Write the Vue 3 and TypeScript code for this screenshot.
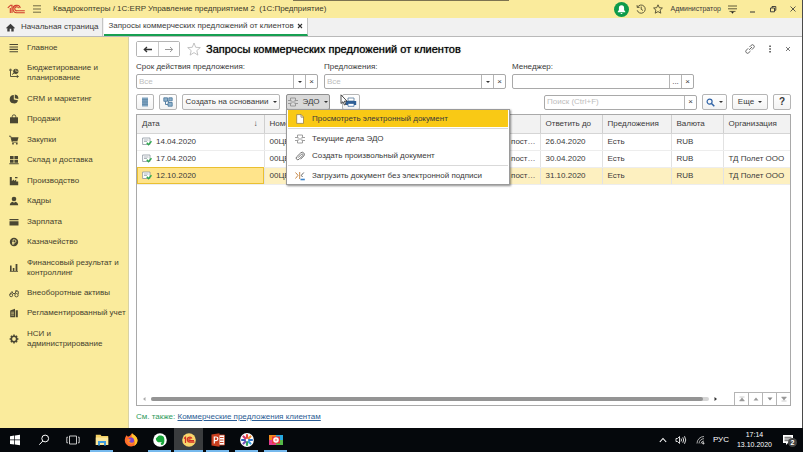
<script setup lang="ts">
import { ref } from 'vue'

interface NavItem {
  label: string
  icon: string
}

interface RequestRow {
  date: string
  number: string
  state: string
  due: string
  offers: string
  currency: string
  company: string
}

const navItems: NavItem[] = [
  { label: 'Главное', icon: 'lines' },
  { label: 'Бюджетирование и\nпланирование', icon: 'plan' },
  { label: 'CRM и маркетинг', icon: 'pie' },
  { label: 'Продажи', icon: 'bag' },
  { label: 'Закупки', icon: 'cart' },
  { label: 'Склад и доставка', icon: 'boxes' },
  { label: 'Производство', icon: 'factory' },
  { label: 'Кадры', icon: 'person' },
  { label: 'Зарплата', icon: 'card' },
  { label: 'Казначейство', icon: 'coin' },
  { label: 'Финансовый результат и\nконтроллинг', icon: 'bars' },
  { label: 'Внеоборотные активы', icon: 'assets' },
  { label: 'Регламентированный учет', icon: 'ledger' },
  { label: 'НСИ и\nадминистрирование', icon: 'gear' },
]

const rows: RequestRow[] = [
  { date: '14.04.2020', number: '00ЦБ', state: 'пост…', due: '26.04.2020', offers: 'Есть', currency: 'RUB', company: '' },
  { date: '17.04.2020', number: '00ЦБ', state: 'пост…', due: '30.04.2020', offers: 'Есть', currency: 'RUB', company: 'ТД Полет ООО' },
  { date: '12.10.2020', number: '00ЦБ', state: 'пост…', due: '31.10.2020', offers: 'Есть', currency: 'RUB', company: 'ТД Полет ООО' },
]

const selected = ref(2)
const validity = ref('')
const offersFilter = ref('')
const manager = ref('')
const search = ref('')
</script>

<template>
  <div class="desktop">
    <div class="window">
      <header class="titlebar">
        <i class="share-strip"></i>
        <svg class="logo" viewBox="0 0 18 10" width="18" height="10" aria-hidden="true">
          <path d="M.8 3.800 3.600 1.200H5V9M3.300 4V9" fill="none" stroke="#d03a2b" stroke-width="1.100" />
          <path d="M13.300 4A3.700 3.700 0 1 0 10 8.700H17.800M11.600 4.200A2 2 0 1 0 10 6.800H17.800" fill="none" stroke="#d03a2b" stroke-width="1.100" />
        </svg>
        <button class="plain" aria-label="Главное меню">
          <svg viewBox="0 0 8 8" width="8" height="8"><path d="M0 .8H8M0 4H8M0 7.200H8" stroke="#6f6944" stroke-width="1" /></svg>
        </button>
        <span class="app-name">Квадрокоптеры / 1С:ERP Управление предприятием 2&nbsp; (1С:Предприятие)</span>
        <div class="title-tools">
          <button class="plain bell" aria-label="Уведомления">
            <svg viewBox="0 0 15 15" width="15" height="15">
              <circle cx="7.5" cy="7.5" r="7.5" fill="#0d9b4a" />
              <path d="M7.5 3.200a2.700 2.700 0 0 0-2.600 2.700v2L3.700 9.700v.6h7.600v-.6L10.100 7.900V5.900A2.700 2.700 0 0 0 7.500 3.200ZM6.500 11h2a1 1 0 0 1-2 0Z" fill="#fff" />
            </svg>
          </button>
          <button class="plain" aria-label="История">
            <svg viewBox="0 0 10 10" width="10" height="10" fill="none" stroke="#4e4a30" stroke-width=".9">
              <path d="M1.500 3.200A4.100 4.100 0 1 1 1.200 6.300M1 1.200 1.300 3.500 3.600 3.300M5.200 2.600V5.300L7 6.500" />
            </svg>
          </button>
          <button class="plain" aria-label="Избранное">
            <svg viewBox="0 0 10 10" width="10" height="10"><path d="m5 .8 1.300 2.900 3.100.3-2.300 2.100.7 3.100L5 7.600 2.200 9.200l.7-3.100L.6 4l3.100-.3Z" fill="none" stroke="#4e4a30" stroke-width=".9" /></svg>
          </button>
          <span class="user">Администратор</span>
          <button class="plain" aria-label="Настройки">
            <svg viewBox="0 0 9 9" width="9" height="9"><path d="M0 1H9M0 3.800H9M1.500 6.400H7.500" stroke="#4e4a30" stroke-width=".9" /><path d="M3 6.800H6L4.500 8.800Z" fill="#222" /></svg>
          </button>
          <button class="plain win" aria-label="Свернуть">
            <svg viewBox="0 0 8 8" width="8" height="8"><path d="M1 7H6" stroke="#333" stroke-width="1" /></svg>
          </button>
          <button class="plain win" aria-label="Восстановить">
            <svg viewBox="0 0 8 8" width="8" height="8" fill="none" stroke="#333" stroke-width=".9"><path d="M1.500 3H5.500V6.800H1.500ZM3 3V1.500H6.800V5.300H5.500" /></svg>
          </button>
          <button class="plain win" aria-label="Закрыть">
            <svg viewBox="0 0 8 8" width="8" height="8"><path d="m1.500 1.500 5 5m0-5-5 5" stroke="#333" stroke-width=".8" /></svg>
          </button>
        </div>
      </header>

      <nav class="tabs" aria-label="Открытые окна">
        <a class="tab" href="#home">
          <svg viewBox="0 0 9 9" width="9" height="9"><path d="M4.500.7 0 4.900l.7.600.6-.5V8.500H3.700V5.800H5.300V8.500H7.700V5l.6.500.7-.6Z" fill="#3c3c3c" /></svg>
          Начальная страница
        </a>
        <a class="tab current" href="#requests">
          <span class="tab-text">Запросы коммерческих предложений от клиентов</span>
          <svg viewBox="0 0 6 6" width="6" height="6"><path d="m1 1 4 4m0-4-4 4" stroke="#333" stroke-width="1.100" /></svg>
        </a>
      </nav>

      <div class="body">
        <nav class="sidebar" aria-label="Разделы">
          <a v-for="item in navItems" :key="item.label" class="nav-item" href="#section">
            <svg viewBox="0 0 10 10" width="10" height="10" fill="#4a4733" aria-hidden="true">
              <path v-if="item.icon === 'lines'" d="M.5 1h8.500v1.100H.5ZM.5 3.400h8.500v1.100H.5ZM.5 5.800h8.500v1.100H.5ZM.5 8.200h8.500v1.100H.5Z" />
              <g v-else-if="item.icon === 'plan'">
                <path d="M1.500 1.500V8.500H9M0 2.800 1.500.8 3 2.800M7.700 7.200 9.500 8.500 7.700 9.800M3 6.500 5 5.200" fill="none" stroke="#4a4733" stroke-width=".9" />
                <circle cx="6.800" cy="3.300" r="2.600" /><path d="M6.800 3.300V1.200M6.800 3.300H9" stroke="#faeb9c" stroke-width=".6" />
              </g>
              <path v-else-if="item.icon === 'pie'" d="M4.800 1A4.200 4.200 0 1 0 9 6.200L4.800 5.400ZM5.800.6V4.300L9.300 5A4 4 0 0 0 5.800.6Z" />
              <g v-else-if="item.icon === 'bag'">
                <path d="M1 3.300H9V9.300H1Z" /><path d="M3.200 4.500V2.600a1.800 1.800 0 0 1 3.600 0V4.500" fill="none" stroke="#4a4733" stroke-width=".9" />
              </g>
              <g v-else-if="item.icon === 'cart'">
                <path d="M2 2.200H9.500L8.500 6H3Z" /><path d="M0 1.200H1.700L3.300 7.100H8.600" fill="none" stroke="#4a4733" stroke-width=".9" /><circle cx="4" cy="8.700" r=".9" /><circle cx="7.800" cy="8.700" r=".9" />
              </g>
              <path v-else-if="item.icon === 'boxes'" d="M1 1H4.600V4.200H1ZM5.400 1H9V4.200H5.400ZM1 5H4.600V7.800H1ZM5.400 5H9V7.800H5.400ZM.3 8.300H9.700V9.300H.3Z" />
              <path v-else-if="item.icon === 'factory'" d="M.8 9.200V1H2.800V5L5 3.600V5L7.200 3.600V5.500H9.200V9.200ZM6 1H8.500V2.300H6Z" />
              <g v-else-if="item.icon === 'person'">
                <circle cx="5" cy="3" r="2.300" /><path d="M.8 9.200C.8 7 2.500 6 4 5.800L5 7 6 5.800C7.500 6 9.200 7 9.200 9.200Z" />
              </g>
              <path v-else-if="item.icon === 'card'" d="M.5 2H9.500V3.200H.5ZM.5 4.300H9.500V8.500H.5Z" />
              <g v-else-if="item.icon === 'coin'">
                <circle cx="5" cy="5" r="4.200" /><path d="M4 8V2.800H5.600a1.300 1.300 0 0 1 0 2.700H3M3 6.700H5.600" fill="none" stroke="#faeb9c" stroke-width=".8" />
              </g>
              <path v-else-if="item.icon === 'bars'" d="M1 2.500H2.600V8H1ZM3.800 5H5.400V8H3.800ZM6.600 1H8.400V8H6.600ZM.8 8.200H9V9H.8Z" />
              <g v-else-if="item.icon === 'assets'" fill="none" stroke="#4a4733" stroke-width=".9">
                <path d="M.5 6.500 3 3.500 4 5.500H6L7.500 2.500M6 3H9L9.600 5.800" /><circle cx="2.200" cy="7.200" r="1.500" /><circle cx="7.500" cy="7.200" r="1.700" />
              </g>
              <g v-else-if="item.icon === 'ledger'">
                <path d="M1.200 2.400 6 .8V9.200H1.200ZM6.700 2.200H8.800V9.200H6.700Z" /><path d="M2.200 4.200H5M2.200 5.700H5M2.200 7.200H5" stroke="#faeb9c" stroke-width=".6" />
              </g>
              <g v-else>
                <circle cx="5" cy="5" r="2.700" fill="none" stroke="#4a4733" stroke-width="1.600" />
                <path d="M5 .6V2M5 8V9.400M.6 5H2M8 5H9.400M1.900 1.900l1 1M7.100 7.100l1 1M8.100 1.900l-1 1M2.900 7.100l-1 1" stroke="#4a4733" stroke-width="1.500" />
              </g>
            </svg>
            <span>{{ item.label }}</span>
          </a>
        </nav>

        <main class="form">
          <div class="heading">
            <div class="history">
              <button aria-label="Назад"><svg viewBox="0 0 9 7" width="9" height="7"><path d="M9 3.500H1.500M4 1 1.300 3.500 4 6" fill="none" stroke="#333" stroke-width="1.300" /></svg></button>
              <button aria-label="Вперед"><svg viewBox="0 0 9 7" width="9" height="7"><path d="M0 3.500H7.500M5 1 7.700 3.500 5 6" fill="none" stroke="#999" stroke-width="1" /></svg></button>
            </div>
            <button class="plain star" aria-label="В избранное">
              <svg viewBox="0 0 14 14" width="14" height="14"><path d="m7 1 1.700 4.300 4.600.3-3.500 3 1.100 4.500L7 10.600l-3.900 2.500 1.100-4.500-3.500-3 4.600-.3Z" fill="#fff" stroke="#b4b4b4" stroke-width=".8" /></svg>
            </button>
            <h1>Запросы коммерческих предложений от клиентов</h1>
            <div class="heading-tools">
              <button class="plain" aria-label="Ссылка">
                <svg viewBox="0 0 10 10" width="10" height="10" fill="none" stroke="#555" stroke-width=".9"><path d="M4.200 5.800 7 3M4.500 3 6.200 1.300a1.600 1.600 0 0 1 2.500 2.500L6.800 5.700M5.500 7 3.800 8.700A1.600 1.600 0 0 1 1.300 6.200L3.200 4.300" /></svg>
              </button>
              <button class="plain" aria-label="Дополнительно">
                <svg viewBox="0 0 8 8" width="8" height="8" fill="#444"><path d="M3.300.5h1.500V2H3.300ZM3.300 3.300h1.500v1.500H3.300ZM3.300 6.100h1.500v1.500H3.300Z" /></svg>
              </button>
              <button class="plain" aria-label="Закрыть форму">
                <svg viewBox="0 0 6 6" width="6" height="6"><path d="m1 1 4 4m0-4-4 4" stroke="#555" stroke-width=".8" /></svg>
              </button>
            </div>
          </div>

          <div class="filters">
            <div class="field">
              <label for="validity">Срок действия предложения:</label>
              <div class="box">
                <input id="validity" v-model="validity" placeholder="Все" />
                <button aria-label="Выбрать срок"><i class="caret"></i></button>
                <button aria-label="Очистить срок">×</button>
              </div>
            </div>
            <div class="field">
              <label for="offers">Предложения:</label>
              <div class="box">
                <input id="offers" v-model="offersFilter" placeholder="Все" />
                <button aria-label="Выбрать предложения"><i class="caret"></i></button>
                <button aria-label="Очистить предложения">×</button>
              </div>
            </div>
            <div class="field">
              <label for="manager">Менеджер:</label>
              <div class="box">
                <input id="manager" v-model="manager" />
                <button aria-label="Выбрать менеджера">...</button>
                <button aria-label="Очистить менеджера">×</button>
              </div>
            </div>
          </div>

          <div class="toolbar">
            <button class="btn square" aria-label="Список">
              <svg viewBox="0 0 10 10" width="10" height="10"><path d="M2 .5H8V9.500H2Z" fill="#7fa3c0" /><path d="M2 2.700H8M2 5H8M2 7.300H8" stroke="#4d7899" stroke-width=".6" /></svg>
            </button>
            <button class="btn square" aria-label="Структура подчиненности">
              <svg viewBox="0 0 10 10" width="10" height="10"><path d="M.8.8H4.500V4.300H.8ZM5.800.8H9.200V3.800H5.800ZM5 5.500H9.200V9.200H5Z" fill="#8fb2cc" stroke="#47759b" stroke-width=".8" /><path d="M2.500 4.300V7.500H5M4.500 3 6 5.500" stroke="#47759b" stroke-width=".9" fill="none" /></svg>
            </button>
            <button class="btn create">Создать на основании <i class="caret"></i></button>
            <div class="menu-anchor">
              <button class="btn edo" aria-haspopup="true" aria-expanded="true">
                <svg viewBox="0 0 10 10" width="10" height="10" fill="none" stroke="#888" stroke-width=".8"><path d="M2.500 3V1H7.500V3M2.500 7V9H7.500V7M0 3.500H3.500M6.500 3.500H10M0 6.500H3.500M6.500 6.500H10M2.500 5H7.500" /></svg>
                ЭДО <i class="caret"></i>
              </button>
              <div class="menu" role="menu">
                <button class="menu-item active" role="menuitem">
                  <svg viewBox="0 0 10 10" width="10" height="10"><path d="M1.700.6H6.200L8.500 3V9.400H1.700Z" fill="#fff" stroke="#8a7440" stroke-width=".7" /><path d="M6 .6V3.200H8.500" fill="none" stroke="#8a7440" stroke-width=".7" /></svg>
                  Просмотреть электронный документ
                </button>
                <hr />
                <button class="menu-item" role="menuitem">
                  <svg viewBox="0 0 10 10" width="10" height="10" fill="none" stroke="#888" stroke-width=".8"><path d="M2.500 3V1H7.500V3M2.500 7V9H7.500V7M0 3.500H3.500M6.500 3.500H10M0 6.500H3.500M6.500 6.500H10M2.500 5H7.500" /></svg>
                  Текущие дела ЭДО
                </button>
                <button class="menu-item" role="menuitem">
                  <svg viewBox="0 0 10 10" width="10" height="10" fill="none" stroke="#666" stroke-width=".9"><path d="M3 6.700 6.500 3.200a.9.900 0 0 1 1.300 1.300L4 8.300A1.700 1.700 0 0 1 1.600 5.900L5.800 1.800a2.200 2.200 0 0 1 3.100 3.100L5.500 8.300" /></svg>
                  Создать произвольный документ
                </button>
                <hr />
                <button class="menu-item" role="menuitem">
                  <svg viewBox="0 0 10 10" width="10" height="10" fill="none" stroke-width="1"><path d="M.5 1.500 3 4.300.5 7.500M4.700 1V8" stroke="#c78a4b" /><path d="M8.800 1.500 6.300 4.300 7.500 6" stroke="#666" /><path d="M5.500 8.500H9.800" stroke="#3c83c9" stroke-width="1.600" /></svg>
                  Загрузить документ без электронной подписи
                </button>
              </div>
            </div>
            <div class="print-wrap">
              <button class="btn square" aria-label="Печать">
                <svg viewBox="0 0 12 10" width="12" height="10"><path d="M3 1H9V4H3Z" fill="#fff" stroke="#56789a" stroke-width=".8" /><path d="M.8 4H11.200V8H.8Z" fill="#2e5f96" /><path d="M3 6.500H9V9.300H3Z" fill="#fff" stroke="#2e5f96" stroke-width=".7" /></svg>
              </button>
              <svg class="pointer" viewBox="0 0 8 12" width="8" height="12" aria-hidden="true"><path d="M1 .8V9.500L3 7.700 4.500 11 5.800 10.400 4.400 7.200H7Z" fill="#fff" stroke="#222" stroke-width=".8" /></svg>
            </div>
            <div class="box search">
              <input v-model="search" aria-label="Поиск" placeholder="Поиск (Ctrl+F)" />
              <button aria-label="Очистить поиск">×</button>
            </div>
            <button class="btn find" aria-label="Найти">
              <svg viewBox="0 0 9 9" width="9" height="9"><circle cx="3.600" cy="3.600" r="2.500" fill="none" stroke="#2e62a6" stroke-width="1.200" /><path d="m5.500 5.500 2.800 2.800" stroke="#2e62a6" stroke-width="1.500" /></svg>
              <i class="caret"></i>
            </button>
            <button class="btn more">Еще <i class="caret"></i></button>
            <button class="btn square help">?</button>
          </div>

          <div class="list">
            <table>
              <colgroup>
                <col class="c-date" /><col class="c-number" /><col class="c-state" /><col class="c-due" /><col class="c-offers" /><col class="c-currency" /><col class="c-company" />
              </colgroup>
              <thead>
                <tr>
                  <th><span class="sorted">Дата <b>↓</b></span></th>
                  <th>Номер</th>
                  <th></th>
                  <th>Ответить до</th>
                  <th>Предложения</th>
                  <th>Валюта</th>
                  <th>Организация</th>
                </tr>
              </thead>
              <tbody>
                <tr v-for="(row, i) in rows" :key="row.date" :class="{ picked: i === selected }" @click="selected = i">
                  <td>
                    <span class="dated">
                      <svg viewBox="0 0 10 9" width="10" height="9"><path d="M.6 1H8V7.500H.6Z" fill="#fff" stroke="#8b96a0" stroke-width=".8" /><path d="M2 3H6.500M2 4.500H5" stroke="#8b96a0" stroke-width=".7" /><path d="M4.800 5.800 6.500 7.700 9.500 4.200" fill="none" stroke="#2fa84f" stroke-width="1.500" /></svg>
                      {{ row.date }}
                    </span>
                  </td>
                  <td>{{ row.number }}</td>
                  <td class="state">{{ row.state }}</td>
                  <td>{{ row.due }}</td>
                  <td>{{ row.offers }}</td>
                  <td>{{ row.currency }}</td>
                  <td>{{ row.company }}</td>
                </tr>
              </tbody>
            </table>
            <div class="list-foot">
              <svg viewBox="0 0 4 6" width="4" height="6"><path d="M3.500 1V5L1 3Z" fill="#aaa" /></svg>
              <div class="track"><div class="thumb"></div></div>
              <svg viewBox="0 0 4 6" width="4" height="6"><path d="M.5 1V5L3 3Z" fill="#333" /></svg>
              <div class="pager">
                <button aria-label="В начало"><svg viewBox="0 0 6 6" width="6" height="6"><path d="M.5 1H5.500M3 1.800 5.500 5H.5Z" fill="#999" stroke="#999" stroke-width=".5" /></svg></button>
                <button aria-label="Вверх"><svg viewBox="0 0 6 6" width="6" height="6"><path d="M3 1.500 5.500 4.500H.5Z" fill="#999" /></svg></button>
                <button aria-label="Вниз"><svg viewBox="0 0 6 6" width="6" height="6"><path d="M3 4.500 5.500 1.500H.5Z" fill="#888" /></svg></button>
                <button aria-label="В конец"><svg viewBox="0 0 6 6" width="6" height="6"><path d="M.5 5H5.500M3 4.200 5.500 1H.5Z" fill="#999" stroke="#999" stroke-width=".5" /></svg></button>
              </div>
            </div>
          </div>

          <p class="see-also">См. также: <a href="#offers">Коммерческие предложения клиентам</a></p>
        </main>
      </div>
    </div>

    <footer class="taskbar">
      <button class="task" aria-label="Пуск"><svg viewBox="0 0 14 14" width="14" height="14"><path d="M2 3.200 6.300 2.500V6.600H2ZM7 2.400 12 1.700V6.600H7ZM2 7.300H6.300V11.500L2 10.900ZM7 7.300H12V12.300L7 11.600Z" fill="#fff" /></svg></button>
      <button class="task" aria-label="Поиск в Windows"><svg viewBox="0 0 14 14" width="14" height="14" fill="none" stroke="#fff" stroke-width="1"><circle cx="8.200" cy="5.500" r="3.400" /><path d="M5.800 8 2.300 11.700" /></svg></button>
      <button class="task" aria-label="Представление задач"><svg viewBox="0 0 14 14" width="14" height="14" fill="none" stroke="#ddd" stroke-width=".9"><path d="M3.500 3H10.500V11H3.500ZM2 4.200H.8V9.800H2M12 4.200H13.200V9.800H12" /></svg></button>
      <button class="task open" aria-label="Проводник"><svg viewBox="0 0 14 14" width="14" height="14"><path d="M.8 1.800H5.500L6.500 3H13.200V12H.8Z" fill="#f3cf63" /><path d="M.8 4.500H13.200V12H.8Z" fill="#fbe79b" /><path d="M3 12.500V8H11V12.500H9V10H5V12.500Z" fill="#3f9bdc" /></svg></button>
      <button class="task" aria-label="Firefox"><svg viewBox="0 0 14 14" width="14" height="14"><path d="M7 13.500A6.300 6.300 0 0 1 1 5.500C1.300 4 2 3 2.500 2.200L4 3.800 6 2.800 8 .3C9 2 13.500 3 13.500 7.500A6.400 6.400 0 0 1 7 13.500Z" fill="#ff6a2b" /><path d="M8 .3C9 2 13.500 3 13.500 7.500 13.500 10 12 12 10 13 12 9 10 5 7.500 4Z" fill="#ffc52e" /><circle cx="7" cy="7.600" r="3" fill="#7a43cf" /><path d="M3.300 7A3.800 3.800 0 0 0 10.500 9 4.500 4.500 0 0 1 5 8.500L7 6.800 4.500 5.800Z" fill="#ff8a2a" /></svg></button>
      <button class="task open" aria-label="Evernote"><svg viewBox="0 0 14 14" width="14" height="14"><circle cx="7" cy="7" r="6.800" fill="#fff" /><path d="M2.800 5.500 5.500 2.700C7.500 2.300 10.500 2.700 11 4.500 11.800 7 11.500 12 9 12 7.500 12 7.200 10 8.500 9.800L8.500 9C6.500 9.800 3 9.500 2.800 5.500Z" fill="#19a63b" /></svg></button>
      <button class="task open running" aria-label="1С:Предприятие"><svg viewBox="0 0 14 14" width="14" height="14"><circle cx="7" cy="7" r="6.800" fill="#f9d56c" /><path d="M2 5.500 3.500 4.300V10M10 5.500A2.500 2.500 0 1 0 8 9.200H12.500M8.700 6.200A1 1 0 1 0 8 7.700H12" fill="none" stroke="#d22f24" stroke-width="1.200" /></svg></button>
      <button class="task open" aria-label="PowerPoint"><svg viewBox="0 0 14 14" width="14" height="14"><path d="M6 2H13.500V12H6Z" fill="#fff" stroke="#c64526" stroke-width=".8" /><path d="M9 4.500H12.500M9 7H12.500M9 9.500H12.500" stroke="#c64526" stroke-width="1" /><path d="M.5 1.500 8.500.3V13.700L.5 12.500Z" fill="#c93f1f" /><path d="M3.300 10.500V4H5A1.700 1.700 0 0 1 5 7.700H3.300" fill="none" stroke="#fff" stroke-width="1.200" /></svg></button>
      <button class="task open" aria-label="Просмотр фото"><svg viewBox="0 0 14 14" width="14" height="14"><circle cx="7" cy="7" r="6.900" fill="#fff" /><g stroke-width="2.200" stroke-linecap="round"><path d="M7 5V2" stroke="#e8483a" /><path d="m8.500 5.500 2-2" stroke="#f08a2c" /><path d="M9 7h3" stroke="#3173c6" /><path d="m8.500 8.500 2 2" stroke="#3c9be0" /><path d="M7 9v3" stroke="#34a763" /><path d="m5.500 8.500-2 2" stroke="#7b4db5" /><path d="M5 7H2" stroke="#2c62b8" /><path d="m5.500 5.500-2-2" stroke="#d3366f" /></g><circle cx="7" cy="7" r="1.200" fill="#fff" /></svg></button>
      <button class="task open" aria-label="Запись экрана"><svg viewBox="0 0 14 14" width="14" height="14"><path d="M0 2H7V7H0Z" fill="#f08a1d" /><path d="M7 2H14V7H7Z" fill="#27a8e0" /><path d="M0 7H7V12H0Z" fill="#e33c8c" /><path d="M7 7H14V12H7Z" fill="#55b848" /><path d="M3 3.500H11V10.500H3Z" fill="#e8363d" /><circle cx="7" cy="7" r="2.800" fill="#fff" /><circle cx="7" cy="7" r="1.300" fill="#f4a3a0" /></svg></button>
      <div class="tray">
        <svg viewBox="0 0 8 6" width="8" height="6"><path d="M.8 5 4 1.500 7.200 5" fill="none" stroke="#fff" stroke-width="1.100" /></svg>
        <svg viewBox="0 0 12 10" width="12" height="10" fill="none" stroke="#eee" stroke-width=".9"><path d="M1 3.500H2.500L4.500 1.500V8.500L2.500 6.500H1ZM6 3.500Q7 5 6 6.500M7.800 2.300Q9.500 5 7.800 7.700M9.500 1.200Q12 5 9.500 8.800" /></svg>
        <svg viewBox="0 0 10 10" width="10" height="10" fill="none" stroke="#bbb" stroke-width=".9"><path d="M2 8.500A7 7 0 0 1 9 1.500M4 8.500A5 5 0 0 1 9 3.700M6 8.500A3 3 0 0 1 9 6" /><circle cx="8.300" cy="8.300" r=".8" fill="#fff" /></svg>
        <span class="lang">РУС</span>
        <time class="clock">17:14<br />13.10.2020</time>
        <span class="notes">
          <svg viewBox="0 0 12 12" width="12" height="12"><path d="M1 1H11V9H6L4 11V9H1Z" fill="#fff" /><path d="M2.500 3.300H9.500M2.500 5H9.500M2.500 6.700H9.500" stroke="#222" stroke-width=".7" /></svg>
          <b>2</b>
        </span>
      </div>
    </footer>
  </div>
</template>

<style>
body {
  background: #fff;
}
</style>

<style scoped>
.desktop {
  display: flex;
  flex-direction: column;
  min-height: 100vh;
  font: 8px/10px "Liberation Sans", Arial, sans-serif;
  color: #3a3a3a;
}
.desktop * {
  box-sizing: border-box;
}
svg {
  display: block;
  flex: none;
}
button,
input {
  margin: 0;
  padding: 0;
  font: inherit;
  color: inherit;
}
a {
  color: inherit;
  text-decoration: none;
}
.plain {
  border: 0;
  background: none;
}
.window {
  display: flex;
  flex: 1;
  flex-direction: column;
  border-right: 1px solid #4a4a4a;
}
.titlebar {
  position: relative;
  display: flex;
  align-items: center;
  height: 18px;
  padding: 0 5px 0 7px;
  background: #faeb9c;
}
.share-strip {
  position: absolute;
  top: 0;
  right: 0;
  left: 0;
  width: 27%;
  height: 1px;
  margin: 0 auto;
  background: #7d7350;
}
.titlebar .logo {
  margin-right: 8px;
}
.app-name {
  margin-left: 12px;
  color: #3d3a29;
}
.title-tools {
  display: flex;
  align-items: center;
  gap: 7px;
  margin-left: auto;
}
.user {
  font-size: 7px;
}
.win {
  margin-left: 5px;
}
.tabs {
  display: flex;
  height: 19px;
  border-bottom: 1px solid #b9b9b9;
  background: #f1f1f1;
}
.tab {
  display: flex;
  align-items: center;
  gap: 6px;
  padding: 0 4px 0 6px;
  border-right: 1px solid #c4c4c4;
}
.tab.current {
  gap: 3px;
  margin-left: 1px;
  padding: 0 4px;
  border-bottom: 2px solid #17a052;
  background: #fff;
}
.body {
  display: flex;
  flex: 1;
}
.sidebar {
  display: flex;
  flex: none;
  flex-direction: column;
  justify-content: space-between;
  width: 129px;
  padding: 6px 1px 79px 9px;
  border-right: 1px solid #d9d2a4;
  background: #faeb9c;
}
.nav-item {
  display: flex;
  align-items: center;
  gap: 8px;
  color: #45422e;
  white-space: pre;
}
.form {
  display: flex;
  flex: 1;
  flex-direction: column;
  min-width: 0;
  padding: 4px 11px 6px 7px;
  background: #fff;
}
.heading {
  display: flex;
  align-items: center;
  height: 16px;
}
.history {
  display: flex;
  border: 1px solid #b5b5b5;
  border-radius: 2px;
}
.history button {
  display: grid;
  place-items: center;
  width: 21px;
  height: 14px;
  border: 0;
  background: #fff;
}
.history button + button {
  border-left: 1px solid #c9c9c9;
}
.star {
  margin: 0 5px 0 7px;
}
h1 {
  margin: 0;
  font-size: 11px;
  line-height: 14px;
  font-weight: 400;
  color: #000;
  text-shadow: 0 0 1px rgba(0, 0, 0, 0.7);
}
.heading-tools {
  display: flex;
  align-items: center;
  gap: 11px;
  margin-left: auto;
}
.filters {
  display: flex;
  gap: 6px;
  margin-top: 5px;
  padding-right: 97px;
}
.field {
  display: flex;
  flex: 1;
  flex-direction: column;
  gap: 2px;
}
.box {
  display: flex;
  height: 15px;
  border: 1px solid #a9a9a9;
  border-radius: 2px;
  background: #fff;
}
.box input {
  flex: 1;
  min-width: 0;
  padding: 0 2px;
  border: 0;
  outline: 0;
  background: none;
}
.box input::placeholder {
  color: #bdbdbd;
}
.box button {
  display: grid;
  place-items: center;
  width: 12px;
  border: 0;
  border-left: 1px solid #b5b5b5;
  background: none;
}
.caret {
  border: 2px solid transparent;
  border-top-color: #333;
  border-bottom-width: 0;
}
.toolbar {
  display: flex;
  align-items: center;
  gap: 5px;
  margin-top: 5px;
}
.btn {
  display: flex;
  align-items: center;
  justify-content: center;
  gap: 4px;
  height: 16px;
  padding: 0 5px;
  border: 1px solid #b5b5b5;
  border-radius: 2px;
  background: linear-gradient(#fff, #f3f3f3);
  white-space: nowrap;
}
.square {
  width: 18px;
  padding: 0;
}
.create {
  width: 98px;
}
.menu-anchor {
  position: relative;
  margin-left: 1px;
}
.edo {
  width: 44px;
  border-color: #8f8f8f;
  background: #d9d9d9;
}
.menu {
  position: absolute;
  z-index: 2;
  top: 15px;
  left: 0;
  width: 224px;
  padding: 0 1px;
  border: 1px solid #9a9a9a;
  background: #fff;
  box-shadow: 1px 1px 2px rgba(0, 0, 0, 0.45);
}
.menu-item {
  display: flex;
  align-items: center;
  gap: 7px;
  width: 100%;
  height: 17px;
  padding: 0 7px;
  border: 0;
  background: none;
}
.menu-item.active {
  background: #f9c915;
}
.menu hr {
  margin: 1px 0;
  border: 0;
  border-top: 1px solid #d9d9d9;
}
.print-wrap {
  position: relative;
  margin-left: 7px;
}
.pointer {
  position: absolute;
  top: 0;
  left: -2px;
}
.search {
  width: 153px;
  margin-left: auto;
}
.find {
  width: 25px;
}
.more {
  width: 36px;
}
.help {
  font-size: 10px;
  font-weight: 700;
}
.list {
  display: flex;
  flex: 1;
  flex-direction: column;
  margin-top: 4px;
  border: 1px solid #a9a9a9;
}
table {
  width: 100%;
  table-layout: fixed;
  border-collapse: collapse;
}
.c-date {
  width: 127px;
}
.c-number {
  width: 120px;
}
.c-due {
  width: 62px;
}
.c-offers {
  width: 69px;
}
.c-currency {
  width: 52px;
}
.c-company {
  width: 67px;
}
th,
td {
  padding: 0 4px 0 5px;
  overflow: hidden;
  border-right: 1px solid #e2e2e2;
  text-align: left;
  font-weight: 400;
  white-space: nowrap;
}
th:last-child,
td:last-child {
  padding-right: 0;
  border-right: 0;
}
th {
  height: 18px;
  border-right-color: #cfcfcf;
  border-bottom: 1px solid #d5d5d5;
  background: #f2f2f2;
}
td {
  height: 17px;
  border-bottom: 1px solid #ededed;
}
.sorted {
  display: flex;
  justify-content: space-between;
  padding-right: 2px;
}
.dated {
  display: flex;
  align-items: center;
  gap: 4px;
}
.state {
  text-align: right;
}
.picked td {
  background: #fdf0c0;
}
.picked td:first-child {
  outline: 1px solid #eac030;
  outline-offset: -1px;
  background: #ffe48b;
}
.list-foot {
  display: flex;
  align-items: flex-end;
  gap: 5px;
  margin-top: auto;
  padding-left: 5px;
}
.list-foot > svg {
  margin-bottom: 3px;
}
.track {
  flex: 1;
  height: 4px;
  margin-bottom: 4px;
  border-radius: 2px;
  background: #d5d5d5;
}
.thumb {
  width: 99%;
  height: 4px;
  border-radius: 2px;
  background: #949494;
}
.pager {
  display: flex;
  margin-left: 11px;
  border-top: 1px solid #b5b5b5;
}
.pager button {
  display: grid;
  place-items: center;
  width: 14px;
  height: 12px;
  border: 0;
  border-left: 1px solid #b5b5b5;
  background: #fff;
}
.see-also {
  margin: 6px 0 0;
  color: #2c9a5b;
}
.see-also a {
  color: #2b5c94;
  text-decoration: underline;
}
.taskbar {
  display: flex;
  height: 24px;
  background: #05080c;
  color: #fff;
}
.task {
  display: grid;
  place-items: center;
  width: 29px;
  border: 0;
  background: none;
}
.open {
  background: linear-gradient(#76b9ed, #76b9ed) center bottom / 23px 2px no-repeat;
}
.running {
  background: linear-gradient(#76b9ed, #76b9ed) center bottom / 29px 2px no-repeat #3a3c3e;
}
.tray {
  display: flex;
  align-items: center;
  gap: 8px;
  margin-left: auto;
  padding-right: 9px;
}
.clock {
  margin-right: 2px;
  font-size: 7px;
  text-align: center;
}
.notes {
  position: relative;
}
.notes b {
  position: absolute;
  top: 4px;
  left: 6px;
  width: 9px;
  height: 9px;
  border-radius: 50%;
  background: #444;
  font-size: 7px;
  line-height: 9px;
  text-align: center;
}
</style>
